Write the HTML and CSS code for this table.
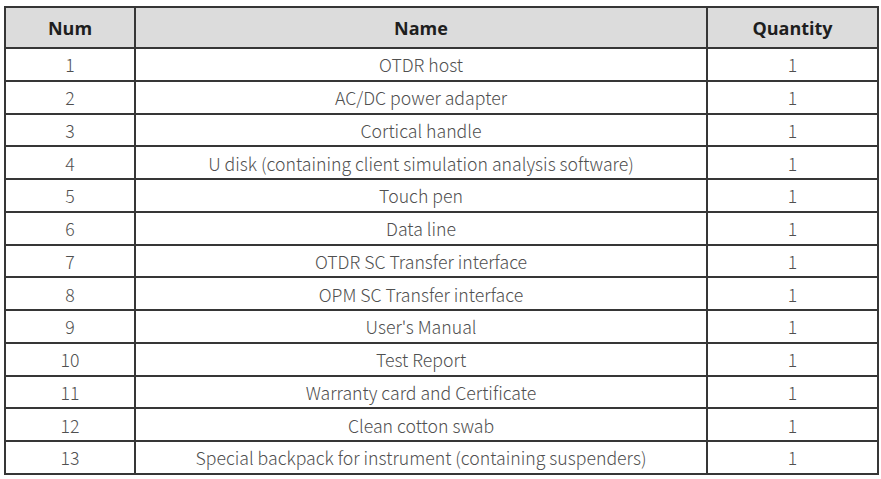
FILE: index.html
```html
<!DOCTYPE html>
<html>
<head>
<meta charset="utf-8">
<link rel="stylesheet" href="styles.css">
</head>
<body>
<table class="list">
  <colgroup><col class="c-num"><col class="c-name"><col class="c-qty"></colgroup>
  <thead>
    <tr><th>Num</th><th>Name</th><th>Quantity</th></tr>
  </thead>
  <tbody>
    <tr><td>1</td><td>OTDR host</td><td>1</td></tr>
    <tr><td>2</td><td>AC/DC power adapter</td><td>1</td></tr>
    <tr><td>3</td><td>Cortical handle</td><td>1</td></tr>
    <tr><td>4</td><td>U disk (containing client simulation analysis software)</td><td>1</td></tr>
    <tr><td>5</td><td>Touch pen</td><td>1</td></tr>
    <tr><td>6</td><td>Data line</td><td>1</td></tr>
    <tr><td>7</td><td>OTDR SC Transfer interface</td><td>1</td></tr>
    <tr><td>8</td><td>OPM SC Transfer interface</td><td>1</td></tr>
    <tr><td>9</td><td>User's Manual</td><td>1</td></tr>
    <tr><td>10</td><td>Test Report</td><td>1</td></tr>
    <tr><td>11</td><td>Warranty card and Certificate</td><td>1</td></tr>
    <tr><td>12</td><td>Clean cotton swab</td><td>1</td></tr>
    <tr><td>13</td><td>Special backpack for instrument (containing suspenders)</td><td>1</td></tr>
  </tbody>
</table>
</body>
</html>
```
FILE: styles.css
```css
html, body {
  margin: 0;
  padding: 0;
  background: #ffffff;
}
body {
  padding: 6px 4px 0 4px;
}
.list {
  border-collapse: collapse;
  table-layout: fixed;
  width: 873px;
  font-family: "Noto Sans CJK SC", "Noto Sans", sans-serif;
}
.c-num { width: 130px; }
.c-name { width: 572px; }
.c-qty { width: 171px; }
.list th, .list td {
  border: 2px solid #363636;
  text-align: center;
  padding: 0;
}
.list th {
  height: 39px;
  background: #dcdcdc;
  color: #1e1e1e;
  font-family: "Open Sans", "Noto Sans", sans-serif;
  font-weight: 700;
  font-size: 18px;
}
.list td {
  height: 30.75px;
  color: #505050;
  font-size: 17.7px;
  font-weight: 300;
  line-height: 20px;
}
```
